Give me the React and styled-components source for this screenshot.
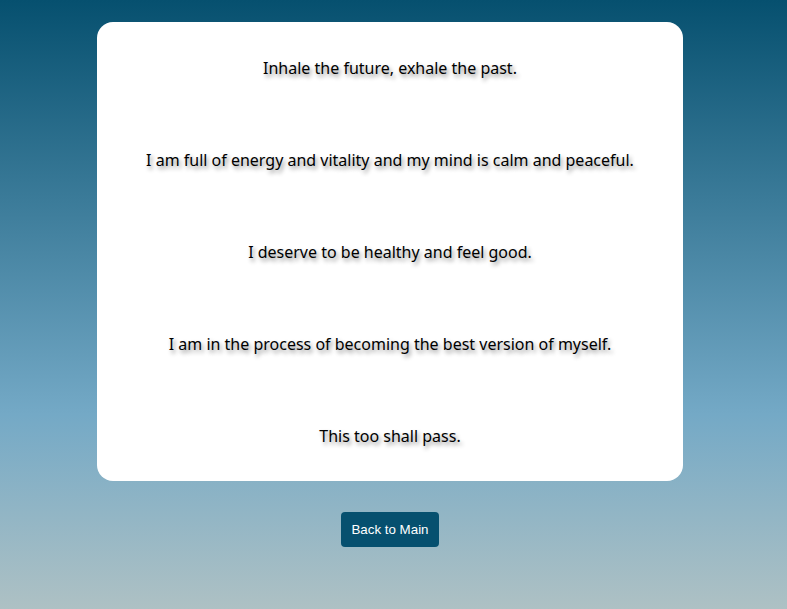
import React from 'react';
import styled, { createGlobalStyle } from 'styled-components';

const GlobalStyle = createGlobalStyle`
  html, body {
    margin: 0;
    padding: 0;
    height: 100%;
  }
  body {
    background: linear-gradient(to bottom, #06506f 0%, #74a9c6 68%, #aec1c4 100%);
    background-attachment: fixed;
    font-family: "Noto Sans", "Open Sans", sans-serif;
  }
`;

const Page = styled.main`
  min-height: 609px;
  display: flex;
  flex-direction: column;
  align-items: center;
  padding: 22px 7px 0 0;
  box-sizing: border-box;
`;

const Card = styled.section`
  width: 586px;
  box-sizing: border-box;
  background: #ffffff;
  border-radius: 16px;
  padding: 36px 20px 35px;
  display: flex;
  flex-direction: column;
  gap: 72px;
`;

const Affirmation = styled.p`
  margin: 0;
  text-align: center;
  font-size: 16px;
  line-height: 20px;
  color: #000;
  text-shadow: 2px 3px 4px rgba(0, 0, 0, 0.45);
`;

const BackButton = styled.button`
  margin-top: 31px;
  width: 98px;
  height: 35px;
  border: none;
  border-radius: 4px;
  background: #06506f;
  color: #fff;
  font-family: "Liberation Sans", Arial, sans-serif;
  font-size: 13.33px;
  cursor: pointer;
`;

const affirmations = [
  'Inhale the future, exhale the past.',
  'I am full of energy and vitality and my mind is calm and peaceful.',
  'I deserve to be healthy and feel good.',
  'I am in the process of becoming the best version of myself.',
  'This too shall pass.',
];

export default function App() {
  return (
    <>
      <GlobalStyle />
      <Page>
        <Card>
          {affirmations.map((text) => (
            <Affirmation key={text}>{text}</Affirmation>
          ))}
        </Card>
        <BackButton>Back to Main</BackButton>
      </Page>
    </>
  );
}
